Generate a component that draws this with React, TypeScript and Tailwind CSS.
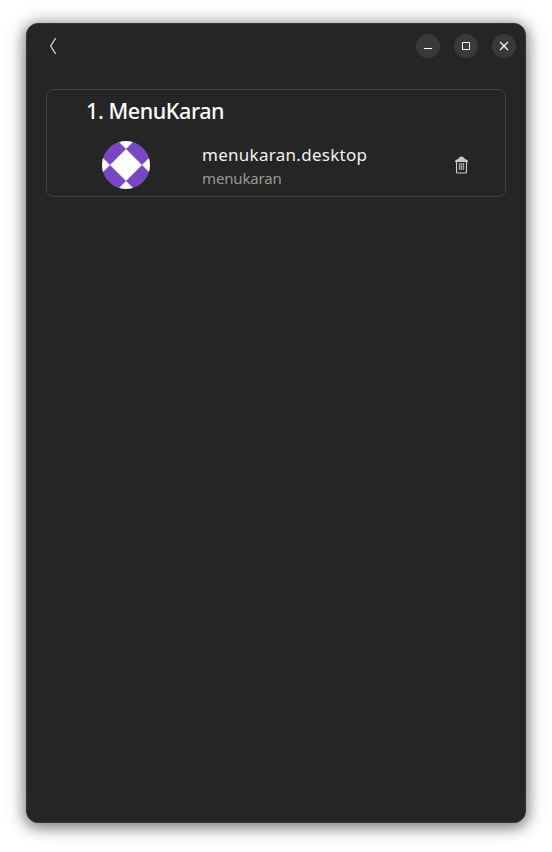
import React from "react";

function WindowButton({ label, children }: { label: string; children: React.ReactNode }) {
  return (
    <button aria-label={label} className="size-6 rounded-full bg-[#393939]">
      <svg viewBox="0 0 24 24" className="size-6" fill="none" stroke="#ffffff">
        {children}
      </svg>
    </button>
  );
}

function Avatar() {
  return (
    <svg viewBox="0 0 48 48" className="size-12 rounded-full">
      <rect width="48" height="48" fill="#7747c4" />
      <path d="M24 8L40 24L24 40L8 24ZM16 0H32L24 8ZM16 48H32L24 40ZM0 16V32L8 24ZM48 16V32L40 24Z" fill="#ffffff" />
    </svg>
  );
}

function TrashIcon() {
  return (
    <svg viewBox="0 0 14 18" className="h-[18px] w-3.5">
      <path d="M0 6V4.8L3.5 2.4Q4.5 0.5 6.5 0.5Q8.5 0.5 9.5 2.4L13 4.8V6Z" fill="#c6c6c6" />
      <path d="M1.5 5V16Q1.5 17 2.5 17H10.5Q11.5 17 11.5 16V5" fill="none" stroke="#d0d0d0" strokeWidth="1.1" />
      <path d="M4.5 7V14M6.5 7V14M8.5 7V14" stroke="#a0a0a0" strokeWidth="1.4" />
    </svg>
  );
}

export default function App() {
  return (
    <div className="h-[852px] w-[552px] overflow-hidden bg-white px-[26px] pt-[23px] font-['Noto_Sans',sans-serif]">
      <main className="h-[800px] w-[500px] rounded-xl border border-[#363636] bg-[#252525] shadow-[0_3px_14px_2px_rgba(0,0,0,0.45),0_1px_24px_2px_rgba(0,0,0,0.12)]">
        <header className="flex h-11 items-center justify-between pr-[9px] pl-[22px]">
          <button aria-label="Back">
            <svg viewBox="0 0 8 18" className="h-[18px] w-2" fill="none" stroke="#cfcfcf" strokeWidth="1.4">
              <path d="M6.7 1L1.7 9L6.7 17" />
            </svg>
          </button>
          <div className="flex gap-3.5">
            <WindowButton label="Minimize">
              <path d="M8 14.5H16" />
            </WindowButton>
            <WindowButton label="Maximize">
              <path d="M8.5 8.5H15.5V15.5H8.5Z" />
            </WindowButton>
            <WindowButton label="Close">
              <path d="M8 8L16 16M16 8L8 16" strokeWidth="1.25" />
            </WindowButton>
          </div>
        </header>
        <section className="mx-[19px] mt-[21px] h-[108px] rounded-lg border border-[#414141] pt-[5px]">
          <h1 className="ml-[39px] h-8 text-[21.5px] leading-8 font-medium tracking-[-0.42px] whitespace-nowrap text-white">1. MenuKaran</h1>
          <div className="mt-3.5 ml-[55px] flex h-12 items-center">
            <Avatar />
            <div className="ml-[52px] w-[253px] pt-[3px] pb-px whitespace-nowrap">
              <p className="text-[17px] leading-6 tracking-[0.28px] text-[#f2f2f2]">menukaran.desktop</p>
              <p className="text-[15px] leading-[22px] tracking-[-0.15px] text-[#9d978f]">menukaran</p>
            </div>
            <button aria-label="Delete">
              <TrashIcon />
            </button>
          </div>
        </section>
      </main>
    </div>
  );
}
